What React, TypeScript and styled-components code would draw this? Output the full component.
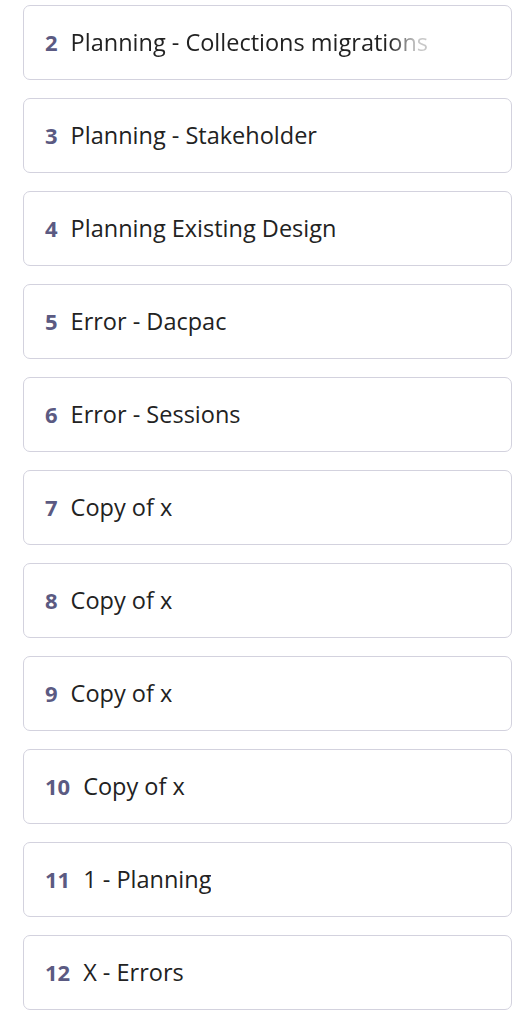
import React from "react";
import styled, { createGlobalStyle } from "styled-components";

const GlobalStyle = createGlobalStyle`
  body {
    margin: 0;
    background: #ffffff;
    font-family: "Open Sans", "Noto Sans", sans-serif;
  }
`;

const List = styled.div`
  display: flex;
  flex-direction: column;
  gap: 18px;
  padding: 5px 19px 0 23px;
`;

const Card = styled.div`
  height: 75px;
  box-sizing: border-box;
  border: 1.5px solid #d3d2de;
  border-radius: 7px;
  background: #ffffff;
  display: flex;
  align-items: center;
  padding: 0 0 2px 21px;
  gap: 13px;
`;

const Num = styled.span`
  font-weight: 700;
  color: #5b5a82;
  font-size: 22px;
`;

const Title = styled.span<{ $fade?: boolean }>`
  color: #222222;
  font-size: 23.5px;
  white-space: nowrap;
  overflow: hidden;
  ${(p) =>
    p.$fade &&
    `
    max-width: 358px;
    -webkit-mask-image: linear-gradient(to right, #000 0, #000 318px, rgba(0,0,0,0.25) 345px);
    mask-image: linear-gradient(to right, #000 0, #000 318px, rgba(0,0,0,0.25) 345px);
  `}
`;

const items = [
  { n: 2, t: "Planning - Collections migrations", fade: true },
  { n: 3, t: "Planning - Stakeholder" },
  { n: 4, t: "Planning Existing Design" },
  { n: 5, t: "Error - Dacpac" },
  { n: 6, t: "Error - Sessions" },
  { n: 7, t: "Copy of x" },
  { n: 8, t: "Copy of x" },
  { n: 9, t: "Copy of x" },
  { n: 10, t: "Copy of x" },
  { n: 11, t: "1 - Planning" },
  { n: 12, t: "X - Errors" },
];

export default function App() {
  return (
    <>
      <GlobalStyle />
      <List>
        {items.map((it) => (
          <Card key={it.n}>
            <Num>{it.n}</Num>
            <Title $fade={it.fade}>{it.t}</Title>
          </Card>
        ))}
      </List>
    </>
  );
}
